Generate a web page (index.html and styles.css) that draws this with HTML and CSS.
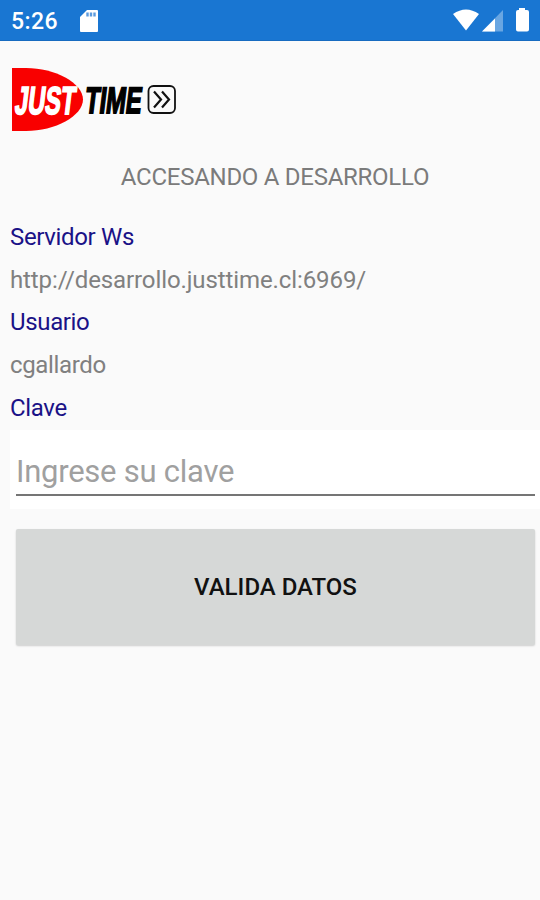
FILE: index.html
```html
<!DOCTYPE html>
<html lang="es">
<head>
<meta charset="utf-8">
<title>Just Time</title>
<link rel="stylesheet" href="styles.css">
</head>
<body>
<header class="status">
  <span class="clock">5:26</span>
  <svg class="sd" width="19" height="24" viewBox="0 0 19 24"><path fill="#fff" d="M7 1H17Q18 1 18 2V22Q18 23 17 23H1Q0 23 0 22V8Z"/><path stroke="#5c9bde" stroke-width="2.4" d="M7.500 3.500V7.500M11 3.500V7.500M14.500 3.500V7.500"/></svg>
  <svg class="signals" width="78" height="24" viewBox="0 0 78 24"><path fill="#fff" d="M1 5Q14-4 27 5L14 21.500Z"/><path fill="#69a6e2" d="M51 1V22.500H30Z"/><path fill="#fff" d="M43 9.500V22.500H30Z"/><path fill="#fff" d="M67 -1H73V1H75Q77 1 77 3V20.500Q77 22.500 75 22.500H66Q64 22.500 64 20.500V3Q64 1 66 1H67Z"/></svg>
</header>
<main class="page">
  <svg class="logo" width="180" height="66" viewBox="0 0 180 66">
    <path class="logo-red" d="M2 2H16C45 2 73 17 73 33.500S45 65 16 65H2Z"/>
    <text class="just" transform="translate(4 47.500) skewX(-7)" x="0" y="0" textLength="60" lengthAdjust="spacingAndGlyphs">JUST</text>
    <text class="time" transform="translate(74 47) skewX(-7)" x="0" y="0" textLength="56.500" lengthAdjust="spacingAndGlyphs">TIME</text>
    <rect class="logo-box" x="138.500" y="20" width="26.500" height="27" rx="5"/>
    <path class="logo-arrows" d="M144 25.500L151 33.500L144 41.500M152 25.500L159 33.500L152 41.500"/>
  </svg>
  <h1 class="title">ACCESANDO A DESARROLLO</h1>
  <dl class="fields">
    <dt>Servidor Ws</dt>
    <dd class="url">http://desarrollo.justtime.cl:6969/</dd>
    <dt>Usuario</dt>
    <dd>cgallardo</dd>
    <dt>Clave</dt>
  </dl>
  <div class="entry"><div class="input">Ingrese su clave</div></div>
  <button class="submit" type="button">VALIDA DATOS</button>
</main>
</body>
</html>
```
FILE: styles.css
```css
* { box-sizing: border-box; }
body { margin: 0; height: 900px; background: #fafafa; font-family: Roboto, sans-serif; }
.status { display: flex; align-items: flex-start; height: 41px; padding: 9px 10px 0 11px; background: #1976d2; border-bottom: 1px solid #176bc0; }
.clock { width: 69px; color: #fff; font-size: 23px; line-height: 26px; font-weight: 500; letter-spacing: .4px; }
.signals { margin-left: auto; overflow: visible; }
.page { padding-left: 10px; }
.logo { display: block; margin-top: 25px; }
.logo-red { fill: #f90000; }
.just, .time { font: 700 39px "Liberation Sans", sans-serif; stroke-width: 1.8; }
.just { fill: #fff; stroke: #fff; }
.time { fill: #000; stroke: #000; font-size: 37px; }
.logo-box { fill: none; stroke: #111; stroke-width: 1.8; }
.logo-arrows { fill: none; stroke: #111; stroke-width: 2.2; }
.title { margin: 31px 0 0; text-align: center; font-size: 24px; line-height: 28px; font-weight: 400; color: #7b7b7b; letter-spacing: -.27px; }
.fields { margin: 25px 0 0; font-size: 24px; line-height: 42.7px; }
.fields dt { color: #1a1287; letter-spacing: -.35px; }
.fields dd { margin: 0; color: #808080; letter-spacing: -.35px; }
.fields .url { letter-spacing: -.1px; }
.entry { height: 79px; padding: 22px 5px 0 6px; background: #fff; }
.input { height: 44px; padding-top: 2px; border-bottom: 2px solid #757575; font-size: 31px; line-height: 36px; letter-spacing: -.25px; color: #a0a0a0; }
.submit { display: block; width: 519px; height: 116px; margin: 20px 0 0 6px; padding: 0; border: 0; border-radius: 2px; background: #d6d8d7; box-shadow: 0 1px 2px rgba(0,0,0,.18); font: 500 24px Roboto, sans-serif; color: #111; }
```
